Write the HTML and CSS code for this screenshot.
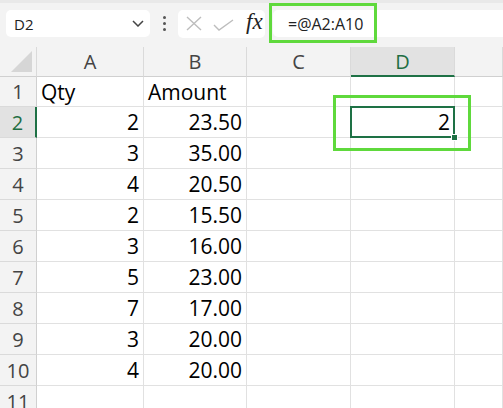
FILE: index.html
```html
<!DOCTYPE html>
<html>
<head>
<meta charset="utf-8">
<link rel="stylesheet" href="styles.css">
</head>
<body>
<div class="toolbar">
  <div class="namebox">
    <span class="name">D2</span>
    <svg class="chev" width="12" height="7" viewBox="0 0 12 7"><path d="M1 1 L6 6 L11 1" fill="none" stroke="#444" stroke-width="1.5"/></svg>
  </div>
  <div class="dots"><i></i><i></i><i></i></div>
  <div class="fxbox">
    <svg class="ico-x" width="16" height="15" viewBox="0 0 16 15"><path d="M1 1 L15 14 M15 1 L1 14" stroke="#bdbdbd" stroke-width="1.4" fill="none"/></svg>
    <svg class="ico-check" width="21" height="12" viewBox="0 0 21 12"><path d="M1 6 L6 11 L20 1" stroke="#bdbdbd" stroke-width="1.4" fill="none"/></svg>
    <span class="fx">fx</span>
  </div>
  <div class="formula">
    <span class="ftext">=@A2:A10</span>
    <div class="hl hl-formula"></div>
  </div>
</div>
<div class="sheet">
  <div class="ch corner"><span class="tri"></span></div>
  <div class="ch">A</div>
  <div class="ch">B</div>
  <div class="ch">C</div>
  <div class="ch ch-sel">D</div>
  <div class="ch"></div>

  <div class="rh r1">1</div><div class="c l r1">Qty</div><div class="c l r1">Amount</div><div class="c r1"></div><div class="c r1"></div><div class="c r1"></div>

  <div class="rh rh-sel">2</div><div class="c r">2</div><div class="c r">23.50</div><div class="c"></div><div class="c r sel">2<span class="selbox"></span><span class="handle"></span><span class="hl hl-cell"></span></div><div class="c"></div>

  <div class="rh">3</div><div class="c r">3</div><div class="c r">35.00</div><div class="c"></div><div class="c"></div><div class="c"></div>
  <div class="rh">4</div><div class="c r">4</div><div class="c r">20.50</div><div class="c"></div><div class="c"></div><div class="c"></div>
  <div class="rh">5</div><div class="c r">2</div><div class="c r">15.50</div><div class="c"></div><div class="c"></div><div class="c"></div>
  <div class="rh">6</div><div class="c r">3</div><div class="c r">16.00</div><div class="c"></div><div class="c"></div><div class="c"></div>
  <div class="rh">7</div><div class="c r">5</div><div class="c r">23.00</div><div class="c"></div><div class="c"></div><div class="c"></div>
  <div class="rh">8</div><div class="c r">7</div><div class="c r">17.00</div><div class="c"></div><div class="c"></div><div class="c"></div>
  <div class="rh">9</div><div class="c r">3</div><div class="c r">20.00</div><div class="c"></div><div class="c"></div><div class="c"></div>
  <div class="rh">10</div><div class="c r">4</div><div class="c r">20.00</div><div class="c"></div><div class="c"></div><div class="c"></div>
  <div class="rh">11</div><div class="c"></div><div class="c"></div><div class="c"></div><div class="c"></div><div class="c"></div>
</div>
</body>
</html>
```
FILE: styles.css
```css
html, body {
  margin: 0;
  padding: 0;
  overflow: hidden;
  background: #ffffff;
  font-family: "Open Sans", "Noto Sans", sans-serif;
}

.toolbar {
  height: 47px;
  box-sizing: border-box;
  background: #f3f3f3;
  border-top: 3px solid #e9e9e9;
  display: flex;
  align-items: center;
  padding-left: 6px;
  padding-bottom: 3px;
}

.namebox {
  width: 144px;
  height: 27px;
  background: #ffffff;
  border-radius: 5px;
  display: flex;
  align-items: center;
  justify-content: space-between;
  box-sizing: border-box;
  padding: 0 6px 0 8px;
}

.name {
  font-size: 15px;
  color: #222;
}

.dots {
  width: 28px;
  display: flex;
  flex-direction: column;
  align-items: center;
  gap: 3px;
}

.dots i {
  display: block;
  width: 3px;
  height: 3px;
  border-radius: 50%;
  background: #555;
}

.fxbox {
  width: 87px;
  height: 28px;
  background: #ffffff;
  border-radius: 5px;
  display: flex;
  align-items: center;
  box-sizing: border-box;
  padding-left: 8px;
}

.ico-x {
  margin-right: 11px;
}

.ico-check {
  margin-right: 13px;
  margin-top: 2px;
}

.fx {
  font-family: "Liberation Serif", "DejaVu Serif", serif;
  font-style: italic;
  font-size: 23px;
  color: #222;
  line-height: 1;
  margin-top: -4px;
  margin-left: -1px;
}

.formula {
  position: relative;
  flex: 1;
  height: 27px;
  margin-left: 8px;
  background: #ffffff;
  border-radius: 5px 0 0 5px;
  display: flex;
  align-items: center;
  padding-left: 15px;
}

.ftext {
  font-size: 16px;
  color: #222;
}

.hl {
  position: absolute;
  border: 3px solid #5fd93c;
  box-sizing: border-box;
  pointer-events: none;
}

.hl-formula {
  left: -4px;
  top: -7px;
  width: 108px;
  height: 40px;
}

.sheet {
  display: grid;
  grid-template-columns: 37px 107px 103px 104px 104px 1fr;
  grid-template-rows: 30px 30px repeat(10, 31px);
}

.ch {
  background: #f3f3f3;
  border-right: 1px solid #dadada;
  border-bottom: 1px solid #d0d0d0;
  box-sizing: border-box;
  font-size: 20px;
  color: #444;
  text-align: center;
  line-height: 28px;
  padding-top: 1px;
}

.corner {
  position: relative;
}

.tri {
  position: absolute;
  right: 4px;
  bottom: 4px;
  width: 0;
  height: 0;
  border-left: 21px solid transparent;
  border-bottom: 21px solid #d6d6d6;
}

.ch-sel {
  background: #e2e2e2;
  color: #1f6e43;
  border-bottom: 2px solid #1e7145;
}

.rh {
  background: #f3f3f3;
  border-right: 1px solid #d0d0d0;
  border-bottom: 1px solid #dadada;
  box-sizing: border-box;
  font-size: 20px;
  color: #444;
  text-align: center;
  line-height: 29px;
  padding-top: 1px;
}

.rh-sel {
  background: #e2e2e2;
  color: #1f6e43;
  border-right: 2px solid #1e7145;
}

.c {
  border-right: 1px solid #e1e1e1;
  border-bottom: 1px solid #e1e1e1;
  box-sizing: border-box;
  font-size: 21px;
  color: #000;
  line-height: 29px;
  padding-top: 1px;
  white-space: nowrap;
}

.r1 {
  line-height: 28px;
}

.l {
  text-align: left;
  padding-left: 4px;
}

.r {
  text-align: right;
  padding-right: 4px;
}

.sel {
  position: relative;
}

.selbox {
  position: absolute;
  left: -1px;
  top: -1px;
  right: -1px;
  bottom: -1px;
  border: 2px solid #1e7145;
  pointer-events: none;
}

.handle {
  position: absolute;
  right: -4px;
  bottom: -4px;
  width: 5px;
  height: 5px;
  background: #1e7145;
  border: 1px solid #ffffff;
}

.hl-cell {
  left: -18px;
  top: -12px;
  width: 138px;
  height: 56px;
}
```
